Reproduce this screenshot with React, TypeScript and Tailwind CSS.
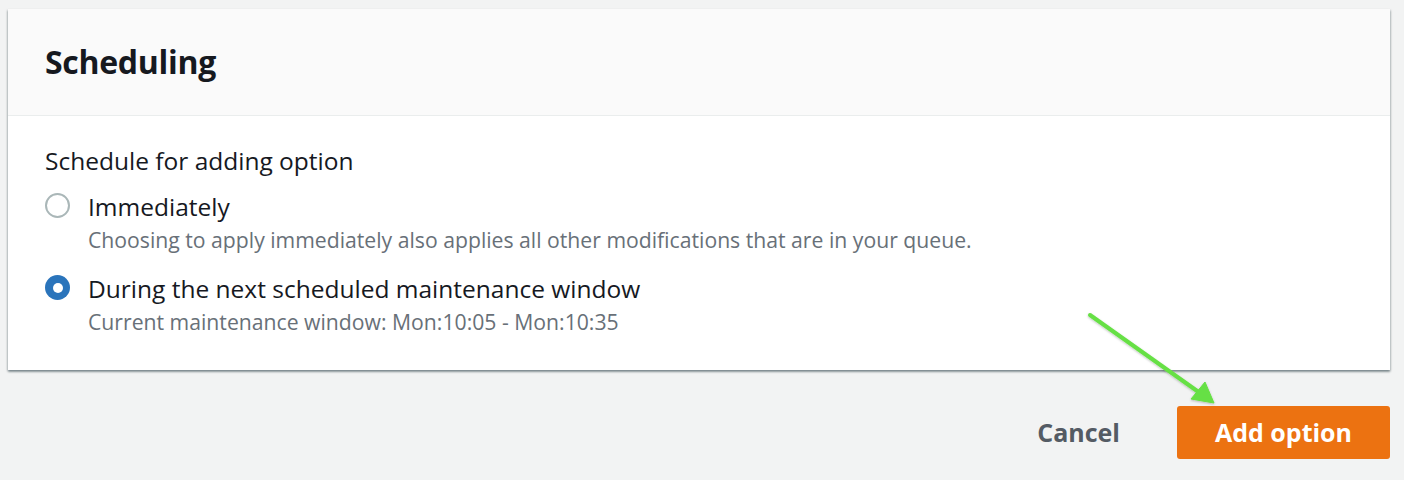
const font = "font-['Open_Sans',_'Noto_Sans',_sans-serif]";

function Radio({ checked }: { checked?: boolean }) {
	return checked ? (
		<div className="flex h-[25px] w-[25px] shrink-0 items-center justify-center rounded-full bg-[#2a74bb]">
			<div className="h-[10px] w-[10px] rounded-full bg-white" />
		</div>
	) : (
		<div className="h-[25px] w-[25px] shrink-0 rounded-full border-2 border-[#aab7b8] bg-white" />
	);
}

const options = [
	{
		label: "Immediately",
		hint: "Choosing to apply immediately also applies all other modifications that are in your queue.",
		checked: false,
	},
	{
		label: "During the next scheduled maintenance window",
		hint: "Current maintenance window: Mon:10:05 - Mon:10:35",
		checked: true,
	},
];

export default function App() {
	return (
		<div className={`relative h-[480px] w-full bg-[#f2f3f3] pt-[9px] ${font}`}>
			<section className="ml-[8px] mr-[14px] bg-white shadow-[0_2px_2px_0_rgba(0,28,36,0.35),1px_1px_2px_0_rgba(0,28,36,0.15),-1px_1px_2px_0_rgba(0,28,36,0.15)]">
				<header className="flex h-[107px] items-center border-b border-[#eaeded] bg-[#fafafa] px-[37px]">
					<h2 className="text-[32px] font-bold tracking-[-0.3px] text-[#16191f]">Scheduling</h2>
				</header>
				<div className="px-[37px] pb-[31px] pt-[29px]">
					<p className="text-[24.5px] leading-[32px] text-[#16191f]">Schedule for adding option</p>
					<div className="mt-[14px] flex flex-col gap-[16px]">
						{options.map((o) => (
							<label key={o.label} className="flex gap-[18px]">
								<div className="pt-[2px]">
									<Radio checked={o.checked} />
								</div>
								<div className="flex flex-col">
									<span className="text-[24.5px] leading-[32px] text-[#16191f]">{o.label}</span>
									<span className="text-[21.2px] leading-[34px] text-[#687078]">{o.hint}</span>
								</div>
							</label>
						))}
					</div>
				</div>
			</section>
			<div className="mr-[14px] mt-[36px] flex items-center justify-end gap-[57px]">
				<button className="text-[25px] font-bold text-[#545b64]">Cancel</button>
				<button className="h-[53px] w-[213px] rounded-[3px] bg-[#ec7211] text-[25px] font-bold text-white">
					Add option
				</button>
			</div>
			<svg className="absolute left-[1080px] top-[305px]" width="150" height="110" viewBox="1080 305 150 110">
				<defs>
					<filter id="sh" x="-20%" y="-20%" width="140%" height="140%">
						<feDropShadow dx="0" dy="1" stdDeviation="1" floodColor="#000" floodOpacity="0.25" />
					</filter>
				</defs>
				<g filter="url(#sh)" fill="#66e044" stroke="#66e044">
					<line x1="1090" y1="315" x2="1200" y2="393" strokeWidth="4" strokeLinecap="round" />
					<polygon points="1214,403 1191,399 1205,382" strokeWidth="1" strokeLinejoin="round" />
				</g>
			</svg>
		</div>
	);
}
